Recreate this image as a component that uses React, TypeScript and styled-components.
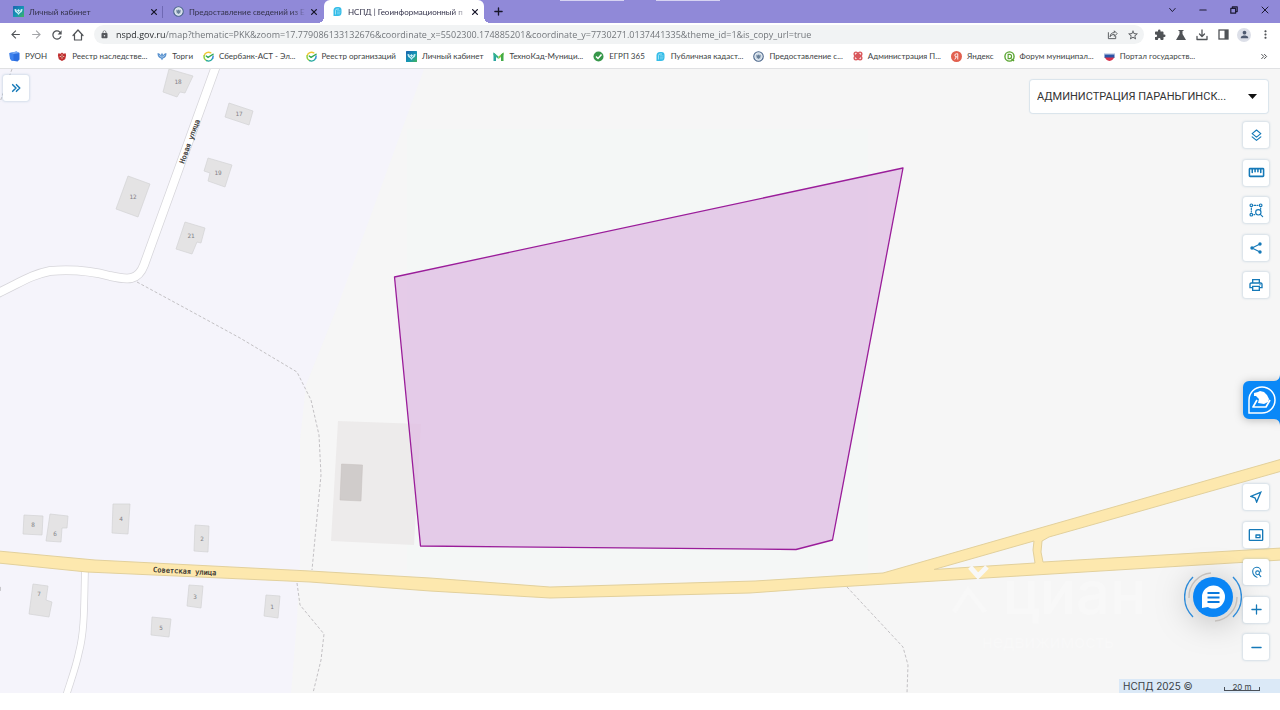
import React from "react";
import styled, { createGlobalStyle, css } from "styled-components";
import {
  MdArrowBack,
  MdArrowForward,
  MdRefresh,
  MdLock,
  MdStarBorder,
  MdExtension,
  MdPerson,
  MdMoreVert,
  MdOutlinePrint,
  MdOutlineNearMe,
} from "react-icons/md";

const uiFont = '"Open Sans", "Noto Sans", sans-serif';
const labelFont = 'Lato, Roboto, sans-serif';
const mapFont = 'Inter, Roboto, sans-serif';
const accent = "#1579b8";

const GlobalStyle = createGlobalStyle`
  * { box-sizing: border-box; }
  body { margin: 0; background: #fff; font-family: ${uiFont}; }
  button, input, select { font: inherit; color: inherit; margin: 0; padding: 0; border: 0; background: none; }
  button { display: inline-flex; align-items: center; justify-content: center; cursor: pointer; }
  svg { display: block; flex: none; }
`;

const Browser = styled.div`
  display: flex;
  flex-direction: column;
  min-height: 100vh;
`;

/* ---------- Tab strip ---------- */

const TabStrip = styled.div`
  position: relative;
  display: flex;
  align-items: stretch;
  height: 23px;
  padding-left: 3px;
  background: #9089d8;
`;

const Tab = styled.div<{ $active?: boolean }>`
  position: relative;
  display: flex;
  align-items: center;
  width: 160px;
  padding: 0 4px 0 10px;
  font-family: ${labelFont};
  font-size: 8px;
  color: #33324a;
  ${(p) =>
    p.$active &&
    css`
      background: #fff;
      border-radius: 6px 6px 0 0;
      padding-left: 8px;
      margin-left: 1px;
      &::before,
      &::after {
        content: "";
        position: absolute;
        bottom: 0;
        width: 6px;
        height: 6px;
      }
      &::before {
        left: -6px;
        background: radial-gradient(circle at 0 0, transparent 6px, #fff 6px);
      }
      &::after {
        right: -6px;
        background: radial-gradient(circle at 100% 0, transparent 6px, #fff 6px);
      }
    `}
`;

const TabTitle = styled.span`
  flex: 1;
  min-width: 0;
  margin: 0 1px 0 5px;
  overflow: hidden;
  white-space: nowrap;
  mask-image: linear-gradient(to right, #000 calc(100% - 16px), transparent);
`;

const TabClose = styled.button`
  width: 10px;
  height: 12px;
  color: #17162a;
`;

const TabDivider = styled.span`
  align-self: center;
  width: 1px;
  height: 12px;
  margin-left: -1px;
  background: #6f69b4;
`;

const NewTab = styled.button`
  width: 16px;
  margin-left: 6px;
  color: #17162a;
`;

const TopMarks = styled.div`
  position: absolute;
  top: 0;
  left: 560px;
  display: flex;
  gap: 32px;
`;

const TopMark = styled.span`
  width: 64px;
  height: 1px;
  background: #d6d3f2;
`;

const WindowControls = styled.div`
  display: flex;
  align-items: center;
  gap: 15px;
  height: 19px;
  margin-left: auto;
  padding-right: 7px;
`;

const WindowButton = styled.button`
  width: 16px;
  height: 16px;
  color: #1c1a33;
`;

/* ---------- Address row ---------- */

const AddressRow = styled.form`
  display: flex;
  align-items: center;
  height: 23px;
  padding: 0 8px 0 8px;
`;

const NavButtons = styled.div`
  display: flex;
  gap: 7px;
`;

const ToolButton = styled.button<{ $muted?: boolean }>`
  width: 14px;
  height: 14px;
  color: ${(p) => (p.$muted ? "#a3a5a8" : "#505357")};
`;

const Omnibox = styled.div`
  display: flex;
  align-items: center;
  flex: 1;
  height: 19px;
  margin-left: 9px;
  padding: 0 4px 0 6px;
  gap: 7px;
  border-radius: 10px;
  background: #f1f3f4;
  color: #55585c;
`;

const UrlInput = styled.input`
  flex: 1;
  min-width: 0;
  height: 19px;
  outline: none;
  font-size: 9px;
  color: transparent;
  background: linear-gradient(to right, #25282c 49px, #6c7075 49px);
  background-clip: text;
`;

const Actions = styled.div`
  display: flex;
  align-items: center;
  gap: 7px;
  margin-left: 9px;
`;

const Avatar = styled.button`
  width: 14px;
  height: 14px;
  border-radius: 50%;
  background: #dcdfe8;
  color: #4f5a70;
`;

/* ---------- Bookmarks ---------- */

const Bookmarks = styled.nav`
  display: flex;
  align-items: center;
  gap: 10px;
  height: 23px;
  padding: 0 12px 2px 9px;
  border-bottom: 1px solid #e0e1e3;
`;

const Bookmark = styled.a`
  display: flex;
  align-items: center;
  gap: 5px;
  font-family: ${labelFont};
  font-size: 8px;
  line-height: 12px;
  white-space: nowrap;
  color: #3c3f43;
  text-decoration: none;
`;

const MoreBookmarks = styled.button`
  margin-left: auto;
  color: #45484c;
`;

/* ---------- Map ---------- */

const MapPanel = styled.main`
  position: relative;
  flex: 1;
  min-height: 600px;
  margin-bottom: 17px;
  overflow: hidden;
  background: #f6f6f6;
  font-family: ${mapFont};
`;

const MapCanvas = styled.svg`
  position: absolute;
  inset: 0;
  width: 100%;
  height: 100%;
`;

const ControlButton = styled.button`
  width: 26px;
  height: 26px;
  border-radius: 3px;
  background: #fff;
  color: ${accent};
  box-shadow: 0 0 2px 1px rgba(120, 160, 190, 0.25);
`;

const PanelToggle = styled(ControlButton)`
  position: absolute;
  top: 6px;
  left: 3px;
`;

const ControlStack = styled.div<{ $bottom?: boolean }>`
  position: absolute;
  right: 11px;
  ${(p) => (p.$bottom ? "bottom: 33px;" : "top: 53px;")}
  display: flex;
  flex-direction: column;
  justify-content: space-between;
  height: 176px;
`;

const OrgPicker = styled.label`
  position: absolute;
  top: 11px;
  right: 12px;
  display: flex;
  align-items: center;
  width: 238px;
  height: 33px;
  padding: 0 11px 0 7px;
  border-radius: 3px;
  background: #fff;
  box-shadow: 0 0 1px 1px #d9e4ec;
`;

const OrgSelect = styled.select`
  flex: 1;
  min-width: 0;
  height: 33px;
  appearance: none;
  outline: none;
  font-family: Roboto, sans-serif;
  font-size: 11px;
  color: #333;
`;

const HelperTab = styled.button`
  position: absolute;
  right: 0;
  top: 305px;
  width: 37px;
  height: 52px;
  filter: drop-shadow(0 1px 4px rgba(0, 0, 0, 0.25));
`;

const ChatButton = styled.button`
  position: absolute;
  right: 38px;
  bottom: 67px;
  width: 58px;
  height: 58px;
  border-radius: 50%;
  filter: drop-shadow(0 4px 16px rgba(0, 0, 0, 0.25));
`;

const Attribution = styled.footer`
  position: absolute;
  right: 0;
  bottom: 0;
  display: flex;
  align-items: center;
  justify-content: space-between;
  width: 161px;
  height: 14px;
  padding: 0 20px 0 4px;
  background: #dbe9f7;
  font-size: 10px;
  line-height: 14px;
  color: #3a3f45;
`;

const ScaleBar = styled.span`
  width: 36px;
  height: 4px;
  margin-top: 6px;
  border: 1px solid #4a5058;
  border-top: 0;
  font-size: 8px;
  line-height: 0;
  text-align: center;
`;

/* ---------- Icons ---------- */

const Stroke = ({ size, box = 24, width = 2, children }: { size: number; box?: number; width?: number; children: React.ReactNode }) => (
  <svg width={size} height={size} viewBox={`0 0 ${box} ${box}`} fill="none" stroke="currentColor" strokeWidth={width} strokeLinecap="round" strokeLinejoin="round">
    {children}
  </svg>
);

const CrossIcon = ({ size, width = 1.6 }: { size: number; width?: number }) => (
  <Stroke size={size} box={10} width={width}>
    <path d="M2 2l6 6M8 2l-6 6" />
  </Stroke>
);

const CabinetIcon = () => (
  <svg width="11" height="11" viewBox="0 0 22 22">
    <defs>
      <linearGradient id="cabinet" x1="0" y1="0" x2="1" y2="1">
        <stop offset="0" stopColor="#1c62ae" />
        <stop offset="0.55" stopColor="#1597b5" />
        <stop offset="1" stopColor="#45b35a" />
      </linearGradient>
    </defs>
    <rect width="22" height="22" rx="1" fill="url(#cabinet)" />
    <path d="M3 6c3 0 4 1 5 3l3-3 3 3c1-2 2-3 5-3 0 5-2 7-5 8l-3 4-3-4C5 13 3 11 3 6z" fill="#c5ecf2" />
    <path d="M7 9l4 4 4-4" fill="none" stroke="#1597b5" strokeWidth="1.5" />
  </svg>
);

const EmblemIcon = () => (
  <svg width="11" height="11" viewBox="0 0 22 22">
    <circle cx="11" cy="11" r="9.5" fill="#eef3f7" stroke="#49658a" strokeWidth="2.2" />
    <circle cx="11" cy="11" r="6.5" fill="#c9d6e3" />
    <path d="M6.500 8l2.500 1 2-2 2 2 2.500-1-1 5-3.500 3-3.500-3z" fill="#6a8099" />
  </svg>
);

const NspdIcon = () => (
  <svg width="11" height="11" viewBox="0 0 22 22">
    <path d="M3 20V9a7 7 0 0 1 7-7h3a6 6 0 0 1 6 6v5a7 7 0 0 1-7 7z" fill="#35bde8" />
    <path d="M7 17V9a3 3 0 0 1 3-3h4" fill="none" stroke="#c9f1fc" strokeWidth="1.400" />
    <path d="M10 9.500h7M10 12.500h7M10 15.500h6" stroke="#93def5" strokeWidth="1.200" />
  </svg>
);

const RuonIcon = () => (
  <svg width="11" height="11" viewBox="0 0 22 22">
    <path d="M1 4l14-3 6 3v13l-4 4-12-2-3-4z" fill="#2c6fe0" />
    <path d="M1 4l14-3 6 3-12 2z" fill="#75a8f5" />
    <path d="M1 4l8 2v14l-4-1-3-4z" fill="#3f83ee" />
  </svg>
);

const ShieldIcon = () => (
  <svg width="10" height="11" viewBox="0 0 22 22">
    <path d="M3 4l5 1 3-3 3 3 5-1 1 5-2 8-7 4-7-4-2-8z" fill="#c02f30" />
    <path d="M11 6v10M6 11h10" stroke="#f3c9b5" strokeWidth="2" />
    <circle cx="11" cy="11" r="1.500" fill="#8f1f22" />
  </svg>
);

const EagleIcon = () => (
  <svg width="10" height="11" viewBox="0 0 22 22">
    <path d="M1 4c4 0 6 1 7 4l3-5 3 5c1-3 3-4 7-4 0 7-3 10-7 11l-3 4-3-4C4 14 1 11 1 4z" fill="#5b93cf" />
    <path d="M5 8l4 4M17 8l-4 4M11 9v6" stroke="#dcebfa" strokeWidth="1.4" />
  </svg>
);

const SberIcon = () => (
  <svg width="11" height="11" viewBox="0 0 24 24" fill="none" strokeWidth="3" strokeLinecap="round">
    <path d="M17 4A10 10 0 0 0 2.500 10" stroke="#f0c834" />
    <path d="M2.500 10A10 10 0 0 0 8 21" stroke="#8ccf3c" />
    <path d="M8 21a10 10 0 0 0 13-5" stroke="#23a7a0" />
    <path d="M21 16a10 10 0 0 0 1-5" stroke="#2f86d8" />
    <path d="M7 11l4 3L22 7" stroke="#2fa84f" />
  </svg>
);

const TechnoIcon = () => (
  <svg width="11" height="11" viewBox="0 0 22 22">
    <path d="M1 20V3l5 4v13z" fill="#2aa6a0" />
    <path d="M1 3l10 8v5L1 8z" fill="#35b38a" />
    <path d="M21 3L11 11v5l10-8z" fill="#86cb3e" />
    <path d="M16 7l5-4v17h-5z" fill="#43ab48" />
  </svg>
);

const CheckIcon = () => (
  <svg width="11" height="11" viewBox="0 0 22 22">
    <circle cx="11" cy="11" r="10" fill="#37974a" />
    <path d="M6 11l4 4 7-8" fill="none" stroke="#fff" strokeWidth="3" />
  </svg>
);

const KnotIcon = () => (
  <svg width="10" height="10" viewBox="0 0 22 22" fill="none" stroke="#d9585c" strokeWidth="3">
    <circle cx="6.500" cy="6.500" r="4" />
    <circle cx="15.500" cy="6.500" r="4" />
    <circle cx="6.500" cy="15.500" r="4" />
    <circle cx="15.500" cy="15.500" r="4" />
    <path d="M6 6l10 10M16 6L6 16" strokeWidth="3" />
  </svg>
);

const YandexIcon = () => (
  <svg width="11" height="11" viewBox="0 0 22 22">
    <circle cx="11" cy="11" r="11" fill="#e2604f" />
    <path d="M13.500 17V5.500H11a3 3 0 0 0-.5 6H13M10.500 11.500L7.500 17" fill="none" stroke="#fff" strokeWidth="1.800" />
  </svg>
);

const ForumIcon = () => (
  <svg width="11" height="11" viewBox="0 0 24 24" fill="none">
    <circle cx="12" cy="12" r="10" stroke="#58a42f" strokeWidth="3" />
    <path d="M16 17l6 5" stroke="#58a42f" strokeWidth="3" />
    <path d="M9 7.500h3a4.500 4.500 0 0 1 0 9H9z" stroke="#58a42f" strokeWidth="2.500" />
  </svg>
);

const FlagIcon = () => (
  <svg width="11" height="11" viewBox="0 0 22 22">
    <path d="M1 5h20v9H1z" fill="#2b54a6" />
    <path d="M1 4h20v3H1z" fill="#d5dcec" />
    <path d="M2 13h18c-1 4-4 6-9 7-5-1-8-3-9-7z" fill="#d8324c" />
  </svg>
);

const RulerIcon = () => (
  <Stroke size={17} width={2.2}>
    <rect x="2" y="6.500" width="20" height="11" rx="1" />
    <path d="M6 7v5M10 7v4M14 7v4M18 7v5" />
  </Stroke>
);

const LayersIcon = () => (
  <Stroke size={13} width={2.2}>
    <path d="M12 2l8 6.500-8 6.500-8-6.500z" />
    <path d="M4 14.500l8 6.500 8-6.500" />
  </Stroke>
);

const AreaSearchIcon = () => (
  <Stroke size={16} width={1.7}>
    <circle cx="5" cy="5" r="2" />
    <circle cx="19" cy="5" r="2" />
    <circle cx="5" cy="19" r="2" />
    <path d="M9 5h6M5 9v6M19 9v2M9 19h1" strokeDasharray="3 2" />
    <circle cx="15.500" cy="15.500" r="4" />
    <path d="M18.500 18.500L22 22" />
  </Stroke>
);

const ShareIcon = () => (
  <svg width="12" height="12" viewBox="0 0 24 24" fill="currentColor">
    <circle cx="20" cy="4" r="3.400" />
    <circle cx="4" cy="12" r="3.400" />
    <circle cx="20" cy="20" r="3.400" />
    <path d="M20 4L4 12l16 8" fill="none" stroke="currentColor" strokeWidth="2.200" />
  </svg>
);

const InsetIcon = () => (
  <Stroke size={16} width={2}>
    <rect x="2" y="4" width="20" height="16" rx="1" />
    <rect x="12" y="12" width="6" height="4" />
  </Stroke>
);

const PinSearchIcon = () => (
  <Stroke size={13} width={2}>
    <path d="M13 21c-4-2-8-6-8-11a7.500 7.500 0 0 1 15-.5v1" />
    <circle cx="14" cy="12.500" r="3.500" />
    <path d="M16.500 15.500l3.500 4" />
  </Stroke>
);

const HelperIcon = () => (
  <svg width="37" height="52" viewBox="0 0 37 52">
    <path d="M37 0c0 4-2 7-6 7H6a6 6 0 0 0-6 6v26a6 6 0 0 0 6 6h25c4 0 6 3 6 7z" fill="#0a88f7" />
    <path d="M6 39V26A13 13 0 1 1 19 39z" fill="none" stroke="#fff" strokeWidth="1.500" />
    <path d="M11 19l4-1 2-1 4 1 3 3 2 4-1 3-4 2-6-1 1-4-3-3h-2z" fill="#fff" />
    <path d="M14 26l-4 7h13l4-7" fill="none" stroke="#fff" strokeWidth="1.700" strokeLinejoin="round" />
  </svg>
);

const ChatIcon = () => (
  <svg width="58" height="58" viewBox="0 0 58 58" fill="none">
    <circle cx="29" cy="29" r="20" fill="#0a85f5" />
    <path d="M18 40V29a11.500 11.500 0 1 1 11.500 11.500c-2 0-4-.5-5.500-1.500z" fill="#fff" />
    <path d="M23.500 25h12M23.500 29.500h12M23.500 34h12" stroke="#0a79dd" strokeWidth="2" />
    <path d="M9 9a28 28 0 0 0 0 40M49 9a28 28 0 0 1 0 40" stroke="#2f8bd8" strokeWidth="1.400" />
    <path d="M27 5A24 24 0 0 0 5 30M31 53a24 24 0 0 0 22-24" stroke="#c4c0bd" strokeWidth="1.400" />
  </svg>
);

const bookmarks: { label: string; icon: React.ReactNode }[] = [
  { label: "РУОН", icon: <RuonIcon /> },
  { label: "Реестр наследстве...", icon: <ShieldIcon /> },
  { label: "Торги", icon: <EagleIcon /> },
  { label: "Сбербанк-АСТ - Эл...", icon: <SberIcon /> },
  { label: "Реестр организаций", icon: <SberIcon /> },
  { label: "Личный кабинет", icon: <CabinetIcon /> },
  { label: "ТехноКад-Муници...", icon: <TechnoIcon /> },
  { label: "ЕГРП 365", icon: <CheckIcon /> },
  { label: "Публичная кадаст...", icon: <NspdIcon /> },
  { label: "Предоставление с...", icon: <EmblemIcon /> },
  { label: "Администрация П...", icon: <KnotIcon /> },
  { label: "Яндекс", icon: <YandexIcon /> },
  { label: "Форум муниципал...", icon: <ForumIcon /> },
  { label: "Портал государств...", icon: <FlagIcon /> },
];

/* ---------- Map drawing ---------- */

const houses: { n: string; x: number; y: number; points: string }[] = [
  { n: "18", x: 178, y: 84, points: "169,69 193,76 185,93 180,92 177,97 163,92" },
  { n: "17", x: 239, y: 116, points: "229,103 253,111 249,125 225,117" },
  { n: "19", x: 218, y: 175, points: "208,158 232,165 225,187 208,181 210,173 204,171" },
  { n: "12", x: 133, y: 199, points: "128,176 150,184 138,217 116,209" },
  { n: "21", x: 191, y: 238, points: "185,222 205,228 201,243 197,242 192,254 176,249" },
  { n: "8", x: 33, y: 527, points: "24,515 43,516 42,535 23,534" },
  { n: "6", x: 55, y: 536, points: "50,514 68,516 67,528 62,528 61,542 46,541" },
  { n: "4", x: 121, y: 521, points: "113,504 130,504 128,534 112,533" },
  { n: "2", x: 202, y: 541, points: "195,525 209,526 208,552 194,551" },
  { n: "7", x: 39, y: 596, points: "33,584 48,586 46,600 52,602 49,617 29,614" },
  { n: "3", x: 195, y: 599, points: "189,585 203,586 201,608 187,606" },
  { n: "1", x: 272, y: 609, points: "266,595 280,596 278,618 264,616" },
  { n: "5", x: 161, y: 630, points: "152,617 171,619 169,637 151,635" },
];

const lane = "M-4 294C20 283 30 275 50 271C75 269 95 272 110 276C128 280 138 281 144 265L216 66";
const sideLane = "M85 570C84 600 85 630 79 652C76 667 71 680 66 696";

const ParcelMap = () => (
  <MapCanvas viewBox="0 69 1280 624" preserveAspectRatio="xMidYMid slice">
    <rect y="69" width="1280" height="624" fill="#f6f6f6" />
    <path d="M0 69H424L340 300L306 385L300 440V560L297 620L291 693H0z" fill="#f5f4fb" />
    <rect x="407" y="129" width="461" height="441" fill="#f3f8f7" opacity="0.700" />

    <path d="M338 421l83 3-7 121-83-4z" fill="#edebeb" />
    <path d="M341.500 464l21 1-1.500 36-21-1z" fill="#d0cccb" stroke="#c4bfbd" strokeWidth="0.500" />

    {[lane, sideLane].map((d, i) => (
      <g key={d} fill="none">
        <path d={d} stroke="#d6d5da" strokeWidth={i ? 7.5 : 9.5} />
        <path d={d} stroke="#fff" strokeWidth={i ? 6 : 8} />
      </g>
    ))}

    <g fill="none" stroke="#c3c1c4" strokeWidth="1" strokeDasharray="3 2">
      <path d="M137 282L185 308L240 338L297 372L311 400L319 435L321 475L312 570" />
      <path d="M297 583L300 605L324 634L321 660L313 693" />
      <path d="M847 587L903 647L908 665L907 693" />
      <path d="M12 69L0 102" />
    </g>

    <path
      d="M-2 551L95 560L310 571L430 578L550 587L755 581L883 573L1040 528L1282 459V471L1049 537L1042 541L1041 552L1043 562L1282 548V560L1035 575L820 588L750 593L550 598L430 591L310 582L87 572L-2 563z M934 569.500L1034 541L1033 550L1035 563z"
      fill="#fde8ae"
      fillRule="evenodd"
      stroke="#e2d09c"
      strokeWidth="1"
    />

    {houses.map((h) => (
      <g key={h.n}>
        <polygon points={h.points} fill="#e4e3e4" stroke="#d3d2d4" strokeWidth="0.700" />
        <text x={h.x} y={h.y} textAnchor="middle" fontFamily='"DejaVu Sans Mono", monospace' fontSize="6" fill="#807f84">
          {h.n}
        </text>
      </g>
    ))}
    <path d="M-2 586l3 1v4l-3-1z" fill="#c9c8cc" />

    <g fontFamily='"DejaVu Sans Mono", monospace' fontSize="7" fill="#2c2a2a" stroke="#2c2a2a" strokeWidth="0.200">
      <text transform="translate(184 164) rotate(-70)">Новая улица</text>
      <text transform="translate(153 572) rotate(3)">Советская улица</text>
    </g>

    <path d="M394.500 277L903 168L832.500 540L796 549.500L420.500 546z" fill="#dfbce2" fillOpacity="0.740" stroke="#9a1d9a" strokeWidth="1.300" strokeLinejoin="round" />

    <g fill="#f8f8f8" fontFamily="Inter, sans-serif">
      <path d="M970 567l8 9 9-9M954 612l14-22 17 22" fill="none" stroke="#f8f8f8" strokeWidth="5" />
      <text x="1003" y="614" fontSize="60" fontWeight="500">циан</text>
      <text x="982" y="648" fontSize="18">недвижимость</text>
    </g>
  </MapCanvas>
);

export default function App() {
  return (
    <Browser>
      <GlobalStyle />
      <TabStrip>
        <Tab>
          <CabinetIcon />
          <TabTitle>Личный кабинет</TabTitle>
          <TabClose aria-label="Закрыть вкладку"><CrossIcon size={8} /></TabClose>
        </Tab>
        <TabDivider />
        <Tab>
          <EmblemIcon />
          <TabTitle>Предоставление сведений из Е</TabTitle>
          <TabClose aria-label="Закрыть вкладку"><CrossIcon size={8} /></TabClose>
        </Tab>
        <Tab $active>
          <NspdIcon />
          <TabTitle>НСПД | Геоинформационный п</TabTitle>
          <TabClose aria-label="Закрыть вкладку"><CrossIcon size={8} /></TabClose>
        </Tab>
        <NewTab aria-label="Новая вкладка">
          <Stroke size={9} box={10} width={1.5}><path d="M5 1v8M1 5h8" /></Stroke>
        </NewTab>
        <TopMarks><TopMark /><TopMark /></TopMarks>
        <WindowControls>
          <WindowButton aria-label="Поиск вкладок">
            <Stroke size={8} box={10} width={1.2}><path d="M2 3l3.500 4L9 3" /></Stroke>
          </WindowButton>
          <WindowButton aria-label="Свернуть">
            <Stroke size={8} box={10} width={1.3}><path d="M1 5h8" /></Stroke>
          </WindowButton>
          <WindowButton aria-label="Окно">
            <Stroke size={8} box={10} width={1.5}><path d="M1 3h6v6H1zM3 3V1h6v6H7" /></Stroke>
          </WindowButton>
          <WindowButton aria-label="Закрыть"><CrossIcon size={10} width={1} /></WindowButton>
        </WindowControls>
      </TabStrip>

      <AddressRow onSubmit={(e) => e.preventDefault()}>
        <NavButtons>
          <ToolButton type="button" aria-label="Назад"><MdArrowBack size={13} /></ToolButton>
          <ToolButton type="button" $muted aria-label="Вперёд"><MdArrowForward size={13} /></ToolButton>
          <ToolButton type="button" aria-label="Обновить"><MdRefresh size={14} /></ToolButton>
          <ToolButton type="button" aria-label="Главная">
            <Stroke size={12} width={2.4}><path d="M2 13L12 2l10 11M5 11v11h14V11" /></Stroke>
          </ToolButton>
        </NavButtons>
        <Omnibox>
          <MdLock size={9} />
          <UrlInput
            aria-label="Адрес"
            defaultValue="nspd.gov.ru/map?thematic=PKK&zoom=17.779086133132676&coordinate_x=5502300.174885201&coordinate_y=7730271.0137441335&theme_id=1&is_copy_url=true"
          />
          <ToolButton type="button" aria-label="Поделиться">
            <Stroke size={11}><path d="M3 8v13h16v-5M7 16c0-6 4-8 9-8V4l6 6-6 6v-4c-4 0-7 1-9 4z" /></Stroke>
          </ToolButton>
          <ToolButton type="button" aria-label="В закладки"><MdStarBorder size={12} /></ToolButton>
        </Omnibox>
        <Actions>
          <ToolButton type="button" aria-label="Расширения"><MdExtension size={12} /></ToolButton>
          <ToolButton type="button" aria-label="Эксперименты">
            <svg width="12" height="12" viewBox="0 0 24 24" fill="currentColor"><path d="M7 2h10v2h-2v6l7 12H2l7-12V4H7z" /></svg>
          </ToolButton>
          <ToolButton type="button" aria-label="Загрузки">
            <Stroke size={12} width={2.6}><path d="M12 2v12M7 10l5 5 5-5M2 15v6h20v-6" /></Stroke>
          </ToolButton>
          <ToolButton type="button" aria-label="Боковая панель">
            <svg width="11" height="11" viewBox="0 0 22 22"><rect x="2" y="2" width="18" height="18" fill="none" stroke="currentColor" strokeWidth="2.600" /><path d="M13 2h7v18h-7z" fill="currentColor" /></svg>
          </ToolButton>
          <Avatar type="button" aria-label="Профиль"><MdPerson size={11} /></Avatar>
          <ToolButton type="button" aria-label="Меню"><MdMoreVert size={13} /></ToolButton>
        </Actions>
      </AddressRow>

      <Bookmarks aria-label="Закладки">
        {bookmarks.map((b) => (
          <Bookmark key={b.label} href="#">
            {b.icon}
            {b.label}
          </Bookmark>
        ))}
        <MoreBookmarks aria-label="Другие закладки">
          <Stroke size={7} box={10} width={1.4}><path d="M1 2l3 3-3 3M5 2l3 3-3 3" /></Stroke>
        </MoreBookmarks>
      </Bookmarks>

      <MapPanel>
        <ParcelMap />
        <PanelToggle aria-label="Открыть панель">
          <Stroke size={10} box={12} width={1.8}><path d="M2 2l4 4-4 4M6.500 2l4 4-4 4" /></Stroke>
        </PanelToggle>
        <OrgPicker>
          <OrgSelect aria-label="Организация">
            <option>АДМИНИСТРАЦИЯ ПАРАНЬГИНСК...</option>
          </OrgSelect>
          <svg width="10" height="5" viewBox="0 0 10 5"><path d="M1 0h9L5.500 5z" fill="#111" /></svg>
        </OrgPicker>
        <ControlStack>
          <ControlButton aria-label="Слои"><LayersIcon /></ControlButton>
          <ControlButton aria-label="Измерения"><RulerIcon /></ControlButton>
          <ControlButton aria-label="Поиск в области"><AreaSearchIcon /></ControlButton>
          <ControlButton aria-label="Поделиться картой"><ShareIcon /></ControlButton>
          <ControlButton aria-label="Печать"><MdOutlinePrint size={16} /></ControlButton>
        </ControlStack>
        <HelperTab aria-label="Помощник"><HelperIcon /></HelperTab>
        <ChatButton aria-label="Чат"><ChatIcon /></ChatButton>
        <ControlStack $bottom>
          <ControlButton aria-label="Моё местоположение"><MdOutlineNearMe size={16} /></ControlButton>
          <ControlButton aria-label="Обзорная карта"><InsetIcon /></ControlButton>
          <ControlButton aria-label="Поиск точки"><PinSearchIcon /></ControlButton>
          <ControlButton aria-label="Приблизить">
            <Stroke size={11} box={12} width={1.4}><path d="M6 1v10M1 6h10" /></Stroke>
          </ControlButton>
          <ControlButton aria-label="Отдалить">
            <Stroke size={11} box={12} width={1.4}><path d="M1 6h10" /></Stroke>
          </ControlButton>
        </ControlStack>
        <Attribution>
          <span>НСПД 2025 ©</span>
          <ScaleBar>20 m</ScaleBar>
        </Attribution>
      </MapPanel>
    </Browser>
  );
}
